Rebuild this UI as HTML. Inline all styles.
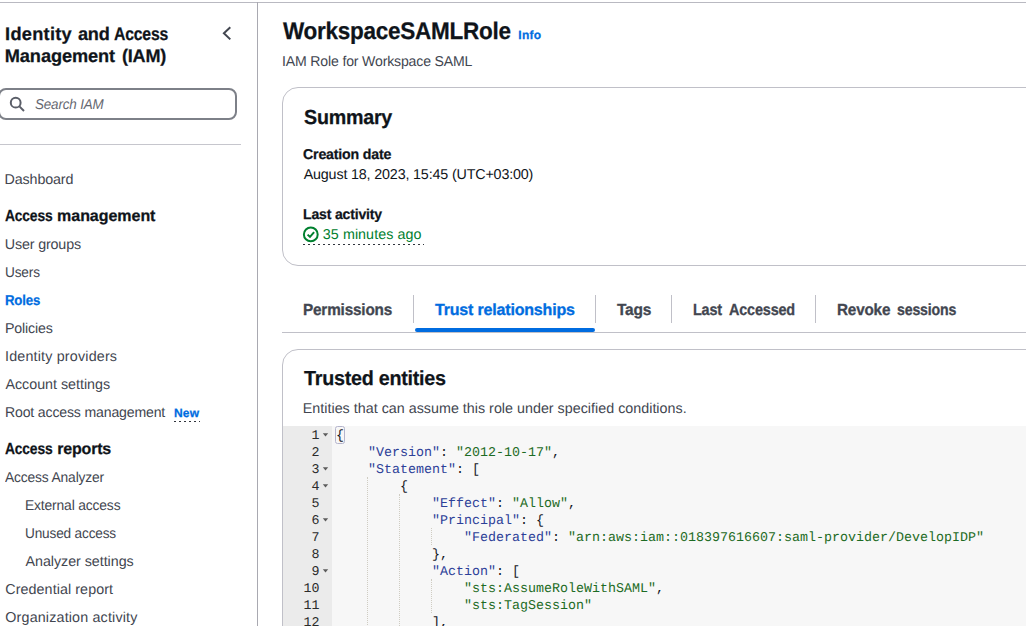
<!DOCTYPE html>
<html lang="en"><head><meta charset="utf-8"><title>WorkspaceSAMLRole | IAM</title>
<style>
html,body{margin:0;padding:0;background:#fff;}
body{width:1026px;height:626px;position:relative;overflow:hidden;font-family:"Liberation Sans", sans-serif;text-rendering:geometricPrecision;}
.t{position:absolute;white-space:nowrap;transform-origin:0 0;}
.abs{position:absolute;}
.card{position:absolute;border:1px solid #c0c0c8;border-radius:16px;box-sizing:border-box;background:#fff;}
.ln{position:absolute;left:283px;width:36.6px;text-align:right;font-family:"Liberation Mono", monospace;font-size:13.333px;line-height:17px;color:#2b2b2b;}
.cl{position:absolute;left:336px;margin:0;font-family:"Liberation Mono", monospace;font-size:13.333px;line-height:17px;color:#16191f;white-space:pre;}
.k{color:#2c4098;} .s{color:#1d6b24;} .p{color:#16191f;}
.fold{position:absolute;left:323.2px;width:0;height:0;border-left:2.8px solid transparent;border-right:2.8px solid transparent;border-top:3.3px solid #666;}
.guide{position:absolute;width:0;border-left:1px dotted #cfccc2;}
.sep{position:absolute;width:1px;background:#c0c0c8;top:295px;height:28px;}
</style></head><body>
<!-- top line -->
<div class="abs" style="left:0;top:1.5px;width:1026px;height:1.2px;background:#b9b9c1"></div>
<!-- sidebar border -->
<div class="abs" style="left:256.6px;top:2px;width:1.2px;height:624px;background:#a9a9b1"></div>
<!-- collapse chevron -->
<svg class="abs" style="left:218px;top:22px" width="20" height="22" viewBox="0 0 20 22"><path d="M12.3 5.2 L5.9 11.2 L12.3 17.4" fill="none" stroke="#424650" stroke-width="2" stroke-linejoin="miter"/></svg>
<!-- search -->
<div class="abs" style="left:-2.5px;top:88px;width:239.5px;height:32px;box-sizing:border-box;border:2px solid #7d8088;border-radius:8px;background:#fff"></div>
<svg class="abs" style="left:8px;top:95px" width="20" height="20" viewBox="0 0 20 20"><circle cx="7.7" cy="7.7" r="4.9" fill="none" stroke="#5a5e68" stroke-width="2"/><path d="M11.4 11.4 L16 16" stroke="#5a5e68" stroke-width="2" fill="none"/></svg>
<!-- sidebar divider -->
<div class="abs" style="left:0;top:143.8px;width:241px;height:1.2px;background:#c6c6cd"></div>
<!-- New dotted underline -->
<div class="abs" style="left:174.3px;top:421px;width:25.4px;height:1px;background:repeating-linear-gradient(90deg,#30343c 0,#30343c 1.8px,transparent 1.8px,transparent 5px)"></div>

<!-- Summary card -->
<div class="card" style="left:282px;top:87px;width:800px;height:179px"></div>
<!-- status icon -->
<svg class="abs" style="left:302px;top:225px" width="18" height="18" viewBox="0 0 18 18"><circle cx="8.8" cy="9.4" r="6.9" fill="none" stroke="#00802f" stroke-width="2"/><path d="M5.6 9.6 L8 11.9 L12.1 7.2" fill="none" stroke="#00802f" stroke-width="2"/></svg>
<div class="abs" style="left:303px;top:244px;width:120.5px;height:1px;background:repeating-linear-gradient(90deg,#30343c 0,#30343c 1.8px,transparent 1.8px,transparent 5px)"></div>

<!-- tabs -->
<div class="abs" style="left:282px;top:331.6px;width:760px;height:1.2px;background:#c0c0c8"></div>
<div class="sep" style="left:413px"></div>
<div class="sep" style="left:595px"></div>
<div class="sep" style="left:671.3px"></div>
<div class="sep" style="left:815px"></div>
<div class="abs" style="left:414.6px;top:327.6px;width:180.4px;height:4.4px;border-radius:2.2px;background:#006ce0"></div>

<!-- Trusted entities card -->
<div class="card" style="left:282px;top:349px;width:800px;height:400px;overflow:hidden">
</div>
<div class="abs" style="left:283px;top:425.5px;width:49px;height:201px;background:#ebebeb"></div>
<div class="abs" style="left:332px;top:425.5px;width:694px;height:201px;background:#f7f7f7"></div>
<div class="guide" style="left:367px;top:477.0px;height:200px"></div>
<div class="guide" style="left:399px;top:494.0px;height:200px"></div>
<div class="guide" style="left:431px;top:528.0px;height:17.0px"></div>
<div class="guide" style="left:431px;top:579.0px;height:34.0px"></div>
<div class="abs" style="left:334.8px;top:425.7px;width:10.2px;height:18.3px;box-sizing:border-box;border:1px solid #b4b4cc;border-radius:2.5px"></div>
<main>
<span class="t" id="t25" style="left:282.82px;top:18px;font-size:24px;line-height:27px;font-weight:700;color:#0f141a;letter-spacing:-0.288px;-webkit-text-stroke:0.25px #0f141a;transform:scaleX(0.9383);">WorkspaceSAMLRole</span>
<span class="t" id="t26" style="left:518.35px;top:28px;font-size:12px;line-height:14px;font-weight:700;color:#006ce0;letter-spacing:0.283px;-webkit-text-stroke:0.25px #006ce0;">Info</span>
<span class="t" id="t27" style="left:282.02px;top:54px;font-size:14.3px;line-height:16px;font-weight:400;color:#424650;letter-spacing:-0.172px;transform:scaleX(0.9863);">IAM Role for Workspace SAML</span>
<span class="t" id="t28" style="left:303.52px;top:107px;font-size:20.3px;line-height:22px;font-weight:700;color:#0f141a;letter-spacing:-0.244px;-webkit-text-stroke:0.25px #0f141a;transform:scaleX(0.9709);">Summary</span>
<span class="t" id="t29" style="left:302.92px;top:147px;font-size:14.3px;line-height:16px;font-weight:700;color:#0f141a;letter-spacing:-0.172px;-webkit-text-stroke:0.25px #0f141a;transform:scaleX(0.9898);">Creation date</span>
<span class="t" id="t30" style="left:303.64px;top:167px;font-size:14.3px;line-height:16px;font-weight:400;color:#0f141a;letter-spacing:-0.155px;">August 18, 2023, 15:45 (UTC+03:00)</span>
<span class="t" id="t31" style="left:303.00px;top:207px;font-size:14.3px;line-height:16px;font-weight:700;color:#0f141a;letter-spacing:-0.172px;-webkit-text-stroke:0.25px #0f141a;transform:scaleX(0.9825);">Last activity</span>
<span class="t" id="t32" style="left:322.86px;top:227px;font-size:14.3px;line-height:16px;font-weight:400;color:#00802f;letter-spacing:0.058px;">35 minutes ago</span>
<span class="t" id="t33" style="left:303.42px;top:301px;font-size:16.1px;line-height:18px;font-weight:700;color:#424650;letter-spacing:-0.193px;-webkit-text-stroke:0.3px #424650;transform:scaleX(0.9516);">Permissions</span>
<span class="t" id="t34" style="left:435.03px;top:301px;font-size:16.1px;line-height:18px;font-weight:700;color:#006ce0;letter-spacing:-0.193px;-webkit-text-stroke:0.3px #006ce0;transform:scaleX(0.9961);">Trust relationships</span>
<span class="t" id="t35" style="left:617.05px;top:301px;font-size:16.1px;line-height:18px;font-weight:700;color:#424650;letter-spacing:-0.193px;-webkit-text-stroke:0.3px #424650;transform:scaleX(0.9621);">Tags</span>
<span class="t" id="t36" style="left:693.30px;top:301px;font-size:16.1px;line-height:18px;font-weight:700;color:#424650;letter-spacing:-0.193px;-webkit-text-stroke:0.3px #424650;transform:scaleX(0.8937);">Last</span>
<span class="t" id="t37" style="left:728.92px;top:301px;font-size:16.1px;line-height:18px;font-weight:700;color:#424650;letter-spacing:-0.193px;-webkit-text-stroke:0.3px #424650;transform:scaleX(0.8962);">Accessed</span>
<span class="t" id="t38" style="left:836.93px;top:301px;font-size:16.1px;line-height:18px;font-weight:700;color:#424650;letter-spacing:-0.193px;-webkit-text-stroke:0.3px #424650;transform:scaleX(0.9480);">Revoke</span>
<span class="t" id="t39" style="left:896.77px;top:301px;font-size:16.1px;line-height:18px;font-weight:700;color:#424650;letter-spacing:-0.193px;-webkit-text-stroke:0.3px #424650;transform:scaleX(0.8781);">sessions</span>
<span class="t" id="t40" style="left:303.58px;top:368px;font-size:20.3px;line-height:22px;font-weight:700;color:#0f141a;letter-spacing:-0.244px;-webkit-text-stroke:0.25px #0f141a;transform:scaleX(0.9712);">Trusted entities</span>
<span class="t" id="t41" style="left:302.79px;top:401px;font-size:14.3px;line-height:16px;font-weight:400;color:#424650;letter-spacing:0.013px;">Entities that can assume this role under specified conditions.</span>
<section aria-label="Trust policy JSON">
<div class="ln" style="top:428.00px">1</div>
<svg class="abs" style="left:322px;top:432px" width="8" height="6" viewBox="0 0 8 6"><path d="M0.8 1.2 L6.2 1.2 L3.5 4.5 Z" fill="#5c5c5c"/></svg>
<pre class="cl" style="top:428.00px"><span class="p">{</span></pre>
<div class="ln" style="top:445.00px">2</div>
<pre class="cl" style="top:445.00px">    <span class="k">"Version"</span><span class="p">: </span><span class="s">"2012-10-17"</span><span class="p">,</span></pre>
<div class="ln" style="top:462.00px">3</div>
<svg class="abs" style="left:322px;top:466px" width="8" height="6" viewBox="0 0 8 6"><path d="M0.8 1.2 L6.2 1.2 L3.5 4.5 Z" fill="#5c5c5c"/></svg>
<pre class="cl" style="top:462.00px">    <span class="k">"Statement"</span><span class="p">: [</span></pre>
<div class="ln" style="top:479.00px">4</div>
<svg class="abs" style="left:322px;top:483px" width="8" height="6" viewBox="0 0 8 6"><path d="M0.8 1.2 L6.2 1.2 L3.5 4.5 Z" fill="#5c5c5c"/></svg>
<pre class="cl" style="top:479.00px">        <span class="p">{</span></pre>
<div class="ln" style="top:496.00px">5</div>
<pre class="cl" style="top:496.00px">            <span class="k">"Effect"</span><span class="p">: </span><span class="s">"Allow"</span><span class="p">,</span></pre>
<div class="ln" style="top:513.00px">6</div>
<svg class="abs" style="left:322px;top:517px" width="8" height="6" viewBox="0 0 8 6"><path d="M0.8 1.2 L6.2 1.2 L3.5 4.5 Z" fill="#5c5c5c"/></svg>
<pre class="cl" style="top:513.00px">            <span class="k">"Principal"</span><span class="p">: {</span></pre>
<div class="ln" style="top:530.00px">7</div>
<pre class="cl" style="top:530.00px">                <span class="k">"Federated"</span><span class="p">: </span><span class="s">"arn:aws:iam::018397616607:saml-provider/DevelopIDP"</span></pre>
<div class="ln" style="top:547.00px">8</div>
<pre class="cl" style="top:547.00px">            <span class="p">},</span></pre>
<div class="ln" style="top:564.00px">9</div>
<svg class="abs" style="left:322px;top:568px" width="8" height="6" viewBox="0 0 8 6"><path d="M0.8 1.2 L6.2 1.2 L3.5 4.5 Z" fill="#5c5c5c"/></svg>
<pre class="cl" style="top:564.00px">            <span class="k">"Action"</span><span class="p">: [</span></pre>
<div class="ln" style="top:581.00px">10</div>
<pre class="cl" style="top:581.00px">                <span class="s">"sts:AssumeRoleWithSAML"</span><span class="p">,</span></pre>
<div class="ln" style="top:598.00px">11</div>
<pre class="cl" style="top:598.00px">                <span class="s">"sts:TagSession"</span></pre>
<div class="ln" style="top:615.00px">12</div>
<pre class="cl" style="top:615.00px">            <span class="p">],</span></pre>
</section>
</main>
<nav aria-label="Identity and Access Management (IAM)">
<span class="t" id="t0" style="left:5.10px;top:24px;font-size:18.2px;line-height:20px;font-weight:700;color:#0f141a;letter-spacing:0.277px;-webkit-text-stroke:0.25px #0f141a;">Identity</span>
<span class="t" id="t1" style="left:77.72px;top:24px;font-size:18.2px;line-height:20px;font-weight:700;color:#0f141a;letter-spacing:-0.218px;-webkit-text-stroke:0.25px #0f141a;transform:scaleX(0.9964);">and</span>
<span class="t" id="t2" style="left:113.66px;top:24px;font-size:18.2px;line-height:20px;font-weight:700;color:#0f141a;letter-spacing:-0.218px;-webkit-text-stroke:0.25px #0f141a;transform:scaleX(0.8658);">Access</span>
<span class="t" id="t3" style="left:4.79px;top:46px;font-size:18.2px;line-height:20px;font-weight:700;color:#0f141a;letter-spacing:-0.087px;-webkit-text-stroke:0.25px #0f141a;">Management</span>
<span class="t" id="t4" style="left:122.12px;top:46px;font-size:18.2px;line-height:20px;font-weight:700;color:#0f141a;letter-spacing:-0.218px;-webkit-text-stroke:0.25px #0f141a;transform:scaleX(0.9923);">(IAM)</span>
<span class="t" id="t5" style="left:35.18px;top:97px;font-size:14.3px;line-height:16px;font-weight:400;color:#656871;letter-spacing:-0.172px;font-style:italic;transform:scaleX(0.9396);">Search IAM</span>
<span class="t" id="t6" style="left:4.62px;top:172px;font-size:14.3px;line-height:16px;font-weight:400;color:#424650;letter-spacing:-0.141px;">Dashboard</span>
<span class="t" id="t7" style="left:5.11px;top:208px;font-size:16px;line-height:17px;font-weight:700;color:#0f141a;letter-spacing:-0.192px;-webkit-text-stroke:0.25px #0f141a;transform:scaleX(0.8638);">Access</span>
<span class="t" id="t8" style="left:57.09px;top:208px;font-size:16px;line-height:17px;font-weight:700;color:#0f141a;letter-spacing:-0.036px;-webkit-text-stroke:0.25px #0f141a;">management</span>
<span class="t" id="t9" style="left:4.80px;top:237px;font-size:14.3px;line-height:16px;font-weight:400;color:#424650;letter-spacing:-0.156px;">User groups</span>
<span class="t" id="t10" style="left:4.67px;top:265px;font-size:14.3px;line-height:16px;font-weight:400;color:#424650;letter-spacing:-0.172px;transform:scaleX(0.9535);">Users</span>
<span class="t" id="t11" style="left:4.62px;top:293px;font-size:14.3px;line-height:16px;font-weight:700;color:#006ce0;letter-spacing:-0.172px;-webkit-text-stroke:0.25px #006ce0;transform:scaleX(0.9231);">Roles</span>
<span class="t" id="t12" style="left:4.57px;top:321px;font-size:14.3px;line-height:16px;font-weight:400;color:#424650;letter-spacing:-0.172px;transform:scaleX(0.9942);">Policies</span>
<span class="t" id="t13" style="left:4.99px;top:349px;font-size:14.3px;line-height:16px;font-weight:400;color:#424650;letter-spacing:0.186px;">Identity providers</span>
<span class="t" id="t14" style="left:5.47px;top:377px;font-size:14.3px;line-height:16px;font-weight:400;color:#424650;letter-spacing:-0.022px;">Account settings</span>
<span class="t" id="t15" style="left:4.83px;top:405px;font-size:14.3px;line-height:16px;font-weight:400;color:#424650;letter-spacing:-0.172px;transform:scaleX(0.9862);">Root access management</span>
<span class="t" id="t16" style="left:173.89px;top:406px;font-size:12px;line-height:14px;font-weight:700;color:#006ce0;letter-spacing:0.210px;-webkit-text-stroke:0.25px #006ce0;">New</span>
<span class="t" id="t17" style="left:5.11px;top:441px;font-size:16px;line-height:17px;font-weight:700;color:#0f141a;letter-spacing:-0.192px;-webkit-text-stroke:0.25px #0f141a;transform:scaleX(0.8638);">Access</span>
<span class="t" id="t18" style="left:57.22px;top:441px;font-size:16px;line-height:17px;font-weight:700;color:#0f141a;letter-spacing:-0.182px;-webkit-text-stroke:0.25px #0f141a;">reports</span>
<span class="t" id="t19" style="left:5.30px;top:470px;font-size:14.3px;line-height:16px;font-weight:400;color:#424650;letter-spacing:-0.172px;transform:scaleX(0.9678);">Access Analyzer</span>
<span class="t" id="t20" style="left:24.52px;top:498px;font-size:14.3px;line-height:16px;font-weight:400;color:#424650;letter-spacing:-0.172px;transform:scaleX(0.9701);">External access</span>
<span class="t" id="t21" style="left:24.90px;top:526px;font-size:14.3px;line-height:16px;font-weight:400;color:#424650;letter-spacing:-0.172px;transform:scaleX(0.9529);">Unused access</span>
<span class="t" id="t22" style="left:25.47px;top:554px;font-size:14.3px;line-height:16px;font-weight:400;color:#424650;letter-spacing:-0.040px;">Analyzer settings</span>
<span class="t" id="t23" style="left:5.32px;top:582px;font-size:14.3px;line-height:16px;font-weight:400;color:#424650;letter-spacing:0.074px;">Credential report</span>
<span class="t" id="t24" style="left:5.32px;top:610px;font-size:14.3px;line-height:16px;font-weight:400;color:#424650;letter-spacing:0.164px;">Organization activity</span>
</nav>
</body></html>
